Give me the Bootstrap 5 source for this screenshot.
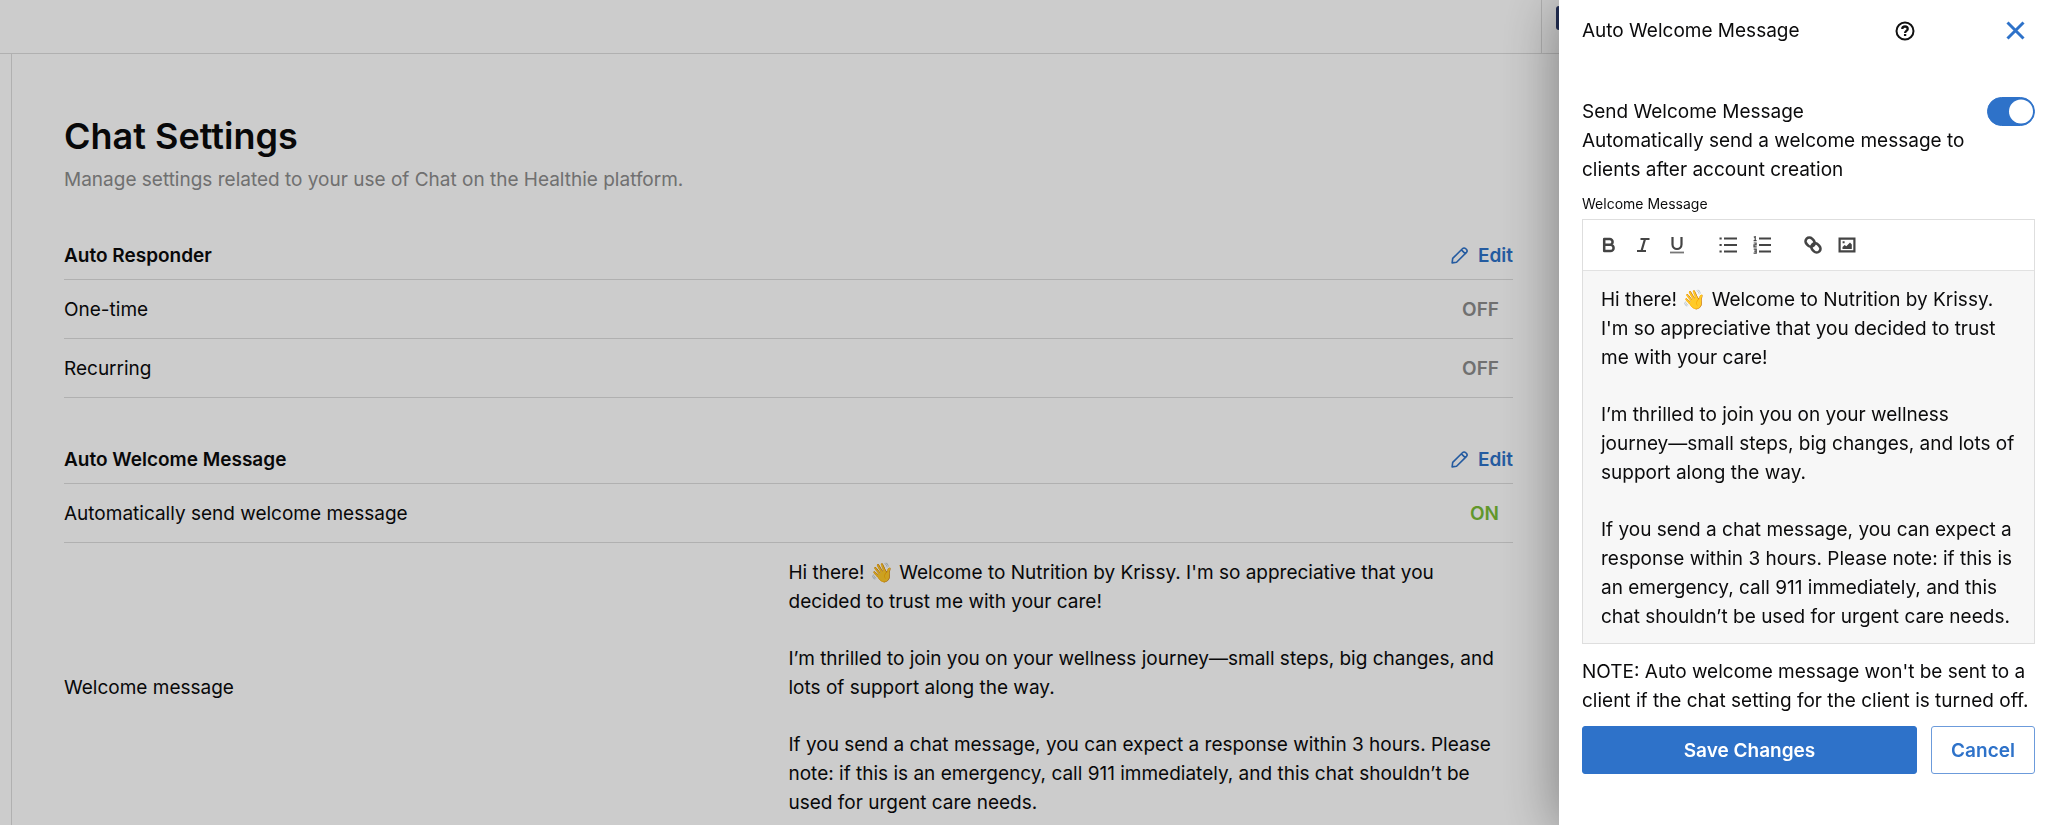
<!DOCTYPE html>
<html lang="en">
<head>
<meta charset="utf-8">
<meta name="viewport" content="width=device-width, initial-scale=1">
<title>Chat Settings</title>
<link rel="stylesheet" href="https://cdn.jsdelivr.net/npm/bootstrap@5.3.0/dist/css/bootstrap.min.css">
<style>
  :root { --panel: 489px; --brand: #2e72c9; --rule: #dcdcdc; }
  body { font-family: Inter, "Liberation Sans", sans-serif; font-size: 19px; line-height: 29px; color: #0b0b0c; background: #fff; }
  .shell { height: 100vh; overflow: hidden; }
  .topbar { height: 54px; border-bottom: 1px solid var(--rule); }
  .account { width: calc(var(--panel) + 18px); border-left: 1px solid var(--rule); padding: 6px 14px; }
  .avatar { width: 24px; height: 24px; background: #2a3968; border-radius: 3px; }
  .rail { width: 12px; border-right: 1px solid var(--rule); }
  .settings { padding: 60px calc(var(--panel) + 46px) 0 52px; }
  .page-title { font-size: 36px; line-height: 44px; font-weight: 600; margin-bottom: 7px; }
  .subtitle { color: #8c8c8c; margin-bottom: 47px; }
  .group { margin-bottom: 47px; }
  .group-head { padding-bottom: 9px; border-bottom: 1px solid var(--rule); }
  .group-title { font-size: 19px; line-height: 29px; font-weight: 600; margin: 0; }
  .edit { color: var(--brand); font-weight: 600; text-decoration: none; gap: 10px; }
  .setting { padding: 15px 0 14px; border-bottom: 1px solid var(--rule); }
  .value { padding-right: 14px; }
  .state { color: #8c8c8c; font-weight: 600; }
  .state-on { color: #7abd36; }
  .message p { margin-bottom: 28px; }
  .message p:last-child { margin-bottom: 0; }
  .shade { background: rgba(0,0,0,.2); z-index: 1040; }
  .offcanvas.panel { --bs-offcanvas-width: var(--panel); border: 0; padding: 0 13px 0 23px; color: inherit; box-shadow: 0 5px 54px rgba(0,0,0,.4); }
  .panel-head { padding: 16px 0 12px; }
  .panel-title { font-size: 19px; line-height: 29px; font-weight: 400; margin: 0; flex: 0 0 313px; }
  .icon-btn { border: 0; padding: 0; background: none; display: flex; align-items: center; justify-content: center; }
  .close-btn { color: var(--brand); margin-right: 10px; }
  .panel-body { padding-top: 40px; }
  .form-switch.toggle { padding: 0; min-height: 0; margin: 0; }
  .toggle .form-check-input { width: 48px; height: 29px; margin: 0; float: none; display: block; border-color: var(--brand); background-color: var(--brand);
    background-size: 29px 29px; box-shadow: none;
    background-image: url("data:image/svg+xml,%3Csvg xmlns='http://www.w3.org/2000/svg' viewBox='0 0 29 29'%3E%3Ccircle cx='16' cy='14.5' r='12' fill='%23fff'/%3E%3C/svg%3E"); }
  .field-label { font-size: 14px; line-height: 18px; margin: 11px 0 6px; }
  .editor { border: 1px solid #dedede; }
  .tools { padding: 8px 9px; border-bottom: 1px solid #e2e2e2; gap: 17px; }
  .tools .icon-btn { width: 34px; height: 34px; color: #444; }
  .tools svg { width: 18px; height: 18px; }
  .editor .message { background: #f7f7f7; padding: 14px 14px 12px 18px; outline: 0; }
  .note { margin: 13px 0 11px; }
  .actions { gap: 14px; }
  .action { height: 48px; border-radius: 3px; font-size: 19px; line-height: 29px; font-weight: 600; padding: 0 16px; --bs-btn-border-color: var(--brand); }
  .save { background: var(--brand); color: #fff; }
  .cancel { color: var(--brand); background: #fff; width: 104px; border-color: #6c9bdb; }
</style>
</head>
<body>
<svg class="d-none" aria-hidden="true">
  <symbol id="pencil" viewBox="0 0 18 18">
    <path fill="none" stroke="currentColor" stroke-width="1.700" stroke-linejoin="round" d="M1.200 16.800l.6-4.700L12.100 1.800c1-1 2.500-1 3.500 0l.6.6c1 1 1 2.500 0 3.500L5.900 16.200zM11 3l4 4"/>
  </symbol>
</svg>

<div class="shell d-flex flex-column">
  <header class="topbar d-flex flex-shrink-0">
    <div class="account ms-auto"><div class="avatar"></div></div>
  </header>
  <div class="d-flex flex-grow-1">
    <div class="rail flex-shrink-0"></div>
    <main class="settings flex-grow-1">
      <h1 class="page-title">Chat Settings</h1>
      <p class="subtitle">Manage settings related to your use of Chat on the Healthie platform.</p>

      <section class="group">
        <div class="group-head d-flex justify-content-between">
          <h2 class="group-title">Auto Responder</h2>
          <a class="edit d-flex align-items-center" href="#"><svg width="17" height="17" aria-hidden="true"><use href="#pencil"/></svg>Edit</a>
        </div>
        <div class="setting d-flex justify-content-between"><span>One-time</span><span class="value state">OFF</span></div>
        <div class="setting d-flex justify-content-between"><span>Recurring</span><span class="value state">OFF</span></div>
      </section>

      <section class="group">
        <div class="group-head d-flex justify-content-between">
          <h2 class="group-title">Auto Welcome Message</h2>
          <a class="edit d-flex align-items-center" href="#"><svg width="17" height="17" aria-hidden="true"><use href="#pencil"/></svg>Edit</a>
        </div>
        <div class="setting d-flex justify-content-between"><span>Automatically send welcome message</span><span class="value state state-on">ON</span></div>
        <div class="setting row g-0 align-items-center">
          <div class="col-6">Welcome message</div>
          <div class="col-6 value message">
            <p>Hi there! 👋 Welcome to Nutrition by Krissy. I'm so appreciative that you decided to trust me with your care!</p>
            <p>I’m thrilled to join you on your wellness journey—small steps, big changes, and lots of support along the way.</p>
            <p>If you send a chat message, you can expect a response within 3 hours. Please note: if this is an emergency, call 911 immediately, and this chat shouldn’t be used for urgent care needs.</p>
          </div>
        </div>
      </section>
    </main>
  </div>
</div>

<div class="shade position-fixed top-0 start-0 w-100 h-100"></div>

<aside class="offcanvas offcanvas-end show panel" data-bs-backdrop="false" tabindex="-1" aria-labelledby="panelTitle">
  <div class="panel-head d-flex align-items-center">
    <h2 class="panel-title" id="panelTitle">Auto Welcome Message</h2>
    <button class="icon-btn" type="button" aria-label="Help">
      <svg width="20" height="20" viewBox="0 0 20 20" fill="none" stroke="#111" stroke-width="2"><circle cx="10" cy="10" r="8.500"/><path stroke-width="2.300" d="M7.300 8.100c0-1.600 1.200-2.600 2.700-2.600s2.700 1 2.700 2.400c0 2-2.600 2-2.600 4M10.100 13v2.100"/></svg>
    </button>
    <button class="icon-btn close-btn ms-auto" type="button" aria-label="Close">
      <svg width="19" height="19" viewBox="0 0 19 19" stroke="currentColor" stroke-width="3"><path d="M1.500 1.500l16 16M17.500 1.500l-16 16"/></svg>
    </button>
  </div>
  <form class="panel-body">
    <div class="d-flex justify-content-between">
      <label for="sendWelcome">Send Welcome Message<br>Automatically send a welcome message to clients after account creation</label>
      <div class="form-check form-switch toggle"><input class="form-check-input" type="checkbox" role="switch" id="sendWelcome" checked></div>
    </div>
    <div class="field-label" id="messageLabel">Welcome Message</div>
    <div class="editor">
      <div class="tools d-flex" role="toolbar" aria-label="Formatting">
        <div class="d-flex">
          <button class="icon-btn" type="button" aria-label="Bold"><svg viewBox="0 0 18 18" fill="none" stroke="currentColor" stroke-width="2.500" stroke-linejoin="round"><path d="M4.200 3h5.500a2.900 2.900 0 0 1 0 5.800H4.200zM4.200 8.800h6.300a3.100 3.100 0 0 1 0 6.200H4.200z"/></svg></button>
          <button class="icon-btn" type="button" aria-label="Italic"><svg viewBox="0 0 18 18" fill="none" stroke="currentColor" stroke-width="2.200"><path d="M6.500 3h9M3 15h9M11 3L7.500 15"/></svg></button>
          <button class="icon-btn" type="button" aria-label="Underline"><svg viewBox="0 0 18 18" fill="none" stroke="currentColor" stroke-width="2.200"><path d="M4.500 1v7.500a4.500 4.500 0 0 0 9 0V1"/><path d="M2 16.500h14" stroke="#777" stroke-width="1.800"/></svg></button>
        </div>
        <div class="d-flex">
          <button class="icon-btn" type="button" aria-label="Bulleted list"><svg viewBox="0 0 18 18" stroke="currentColor" stroke-width="2.200"><path d="M5 2.500h13M5 9h13M5 15.500h13M.5 2.500h2.200M.5 9h2.200M.5 15.500h2.200"/></svg></button>
          <button class="icon-btn" type="button" aria-label="Numbered list"><svg viewBox="0 0 18 18" fill="none" stroke="currentColor" stroke-width="2.200"><path d="M6 2.500h12M6 9h12M6 15.500h12"/><path stroke-width="1.200" d="M.8 1.300L2.200.6v4M.6 4.600h3M.7 7h2.400v1.800H1v2h2.700M.7 13.200h2.500v4H.6M1.200 15.200h2"/></svg></button>
        </div>
        <div class="d-flex">
          <button class="icon-btn" type="button" aria-label="Link"><svg viewBox="0 0 18 18" fill="none" stroke="currentColor" stroke-width="2.600"><rect x="1.200" y="2.300" width="9.800" height="7.600" rx="3.800" transform="rotate(45 6.100 6.100)"/><rect x="7" y="8.100" width="9.800" height="7.600" rx="3.800" transform="rotate(45 11.900 11.900)"/></svg></button>
          <button class="icon-btn" type="button" aria-label="Image"><svg viewBox="0 0 18 18" fill="none" stroke="currentColor" stroke-width="2.200"><path d="M1.600 2.600h14.800v12.800H1.600z"/><path fill="currentColor" stroke="none" d="M4.500 13v-2l2.200-2 1.600 1.300L12 6.500l1.800 2V13zM4.600 5.300h2v2h-2z"/></svg></button>
        </div>
      </div>
      <div class="message" contenteditable="true" role="textbox" aria-multiline="true" aria-labelledby="messageLabel" spellcheck="false">
        <p>Hi there! 👋 Welcome to Nutrition by Krissy. I'm so appreciative that you decided to trust me with your care!</p>
        <p>I’m thrilled to join you on your wellness journey—small steps, big changes, and lots of support along the way.</p>
        <p>If you send a chat message, you can expect a response within 3 hours. Please note: if this is an emergency, call 911 immediately, and this chat shouldn’t be used for urgent care needs.</p>
      </div>
    </div>
    <p class="note">NOTE: Auto welcome message won't be sent to a client if the chat setting for the client is turned off.</p>
    <div class="actions d-flex">
      <button class="btn action save flex-grow-1" type="submit">Save Changes</button>
      <button class="btn action cancel" type="button">Cancel</button>
    </div>
  </form>
</aside>
<script src="https://cdn.jsdelivr.net/npm/bootstrap@5.3.0/dist/js/bootstrap.bundle.min.js"></script>
</body>
</html>
